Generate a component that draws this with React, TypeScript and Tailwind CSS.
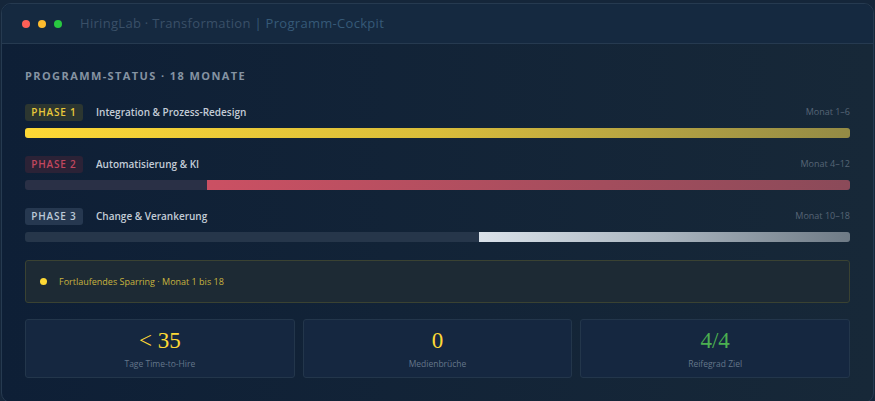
import React from "react";

const phases = [
  {
    tag: "PHASE 1",
    label: "Integration & Prozess-Redesign",
    months: "Monat 1–6",
    badge: "bg-[#2c3630] text-[#e9c93a]",
    track: "bg-[#2a3146]",
    left: 0,
    fill: "bg-gradient-to-r from-[#fdd835] via-[#d9bd3a] to-[#948b45]",
  },
  {
    tag: "PHASE 2",
    label: "Automatisierung & KI",
    months: "Monat 4–12",
    badge: "bg-[#2b2236] text-[#c1475f]",
    track: "bg-[#2a3046]",
    left: 22,
    fill: "bg-gradient-to-r from-[#cb5063] to-[#8b4a59]",
  },
  {
    tag: "PHASE 3",
    label: "Change & Verankerung",
    months: "Monat 10–18",
    badge: "bg-[#263850] text-[#bccad8]",
    track: "bg-[#26364a]",
    left: 55,
    fill: "bg-gradient-to-r from-[#dae2ea] via-[#aab5bf] to-[#6f7b86]",
  },
];

const stats = [
  { value: "< 35", label: "Tage Time-to-Hire", color: "text-[#fdd835]" },
  { value: "0", label: "Medienbrüche", color: "text-[#fdd835]" },
  { value: "4/4", label: "Reifegrad Ziel", color: "text-[#4cb050]" },
];

export default function App() {
  return (
    <div
      className="w-[875px] h-[401px] bg-[#15263a] pt-[3px] px-[1px] overflow-hidden"
      style={{ fontFamily: '"Open Sans", "Noto Sans", sans-serif' }}
    >
      <div className="h-[400px] rounded-[10px] border border-[#263a50] bg-gradient-to-r from-[#0e1f36] to-[#172838] overflow-hidden">
        <div className="h-[40px] flex items-center gap-[8px] pl-[20px] bg-[#152940] border-b border-[#263a50]">
          <span className="w-[8px] h-[8px] rounded-full bg-[#ff5f57]" />
          <span className="w-[8px] h-[8px] rounded-full bg-[#febc2e]" />
          <span className="w-[8px] h-[8px] rounded-full bg-[#28c840]" />
          <span className="ml-[10px] text-[13px] tracking-[0.3px] text-[#3a5068]">
            HiringLab · Transformation <span className="text-[#365a78]">| Programm-Cockpit</span>
          </span>
        </div>

        <div className="px-[23px] pt-[24px]">
          <div className="text-[11px] font-bold tracking-[1.4px] text-[#8593a2] leading-[16px]">
            PROGRAMM-STATUS · 18 MONATE
          </div>

          <div className="mt-[20px] flex flex-col gap-[18px]">
            {phases.map((p) => (
              <div key={p.tag}>
                <div className="flex items-center h-[17px]">
                  <span
                    className={`h-[17px] w-[58px] rounded-[3px] flex items-center justify-center text-[10px] font-semibold tracking-[0.8px] ${p.badge}`}
                  >
                    {p.tag}
                  </span>
                  <span className="ml-[13px] text-[10px] font-semibold text-[#c3ccd6]">{p.label}</span>
                  <span className="ml-auto text-[9px] text-[#566576] pb-[2px]">{p.months}</span>
                </div>
                <div className={`mt-[7px] h-[10px] rounded-[3px] relative overflow-hidden ${p.track}`}>
                  <div
                    className={`absolute top-0 bottom-0 right-0 ${p.fill}`}
                    style={{ left: `${p.left}%` }}
                  />
                </div>
              </div>
            ))}
          </div>

          <div className="mt-[18px] h-[43px] rounded-[3px] border border-[#3a4232] bg-[#1d2a34] flex items-center pl-[14px]">
            <span className="w-[7px] h-[7px] rounded-full bg-[#fdd835]" />
            <span className="ml-[12px] text-[9px] text-[#c8b33e]">Fortlaufendes Sparring · Monat 1 bis 18</span>
          </div>

          <div className="mt-[16px] grid grid-cols-3 gap-[8px]">
            {stats.map((s) => (
              <div
                key={s.label}
                className="h-[59px] rounded-[3px] border border-[#23364b] bg-[#152740] flex flex-col items-center pt-[7px]"
              >
                <span
                  className={`text-[23px] leading-[28px] ${s.color}`}
                  style={{ fontFamily: '"Liberation Serif", serif' }}
                >
                  {s.value}
                </span>
                <span className="mt-[3px] text-[8.5px] text-[#64768a]">{s.label}</span>
              </div>
            ))}
          </div>
        </div>
      </div>
    </div>
  );
}
